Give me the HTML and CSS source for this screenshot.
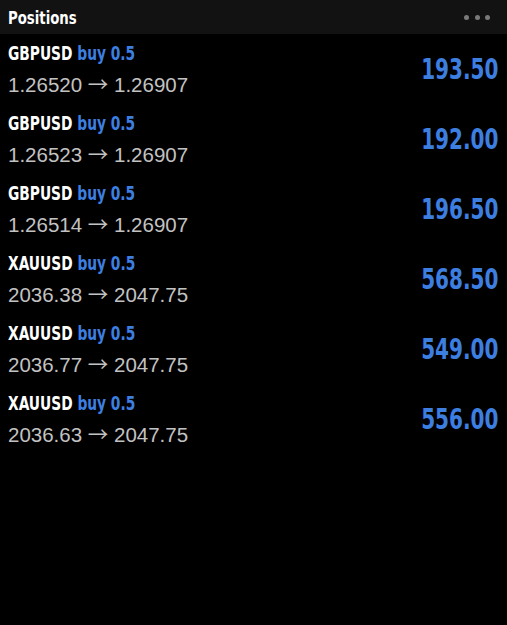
FILE: index.html
```html
<!DOCTYPE html>
<html>
<head>
    <title>Positions</title>
    <meta name="viewport" content="width=device-width, initial-scale=1.0">
    <link rel="stylesheet" href="styles.css">
</head>
<body>
    <div id="header">
        <span class="title">Positions</span>
        <span class="dots"><i></i><i></i><i></i></span>
    </div>
    <div id="positions">
        <div class="row">
            <div class="info">
                <div class="symbol">GBPUSD <span class="side">buy 0.5</span></div>
                <div class="prices">1.26520 <span class="arrow">→</span> 1.26907</div>
            </div>
            <div class="profit">193.50</div>
        </div>
        <div class="row">
            <div class="info">
                <div class="symbol">GBPUSD <span class="side">buy 0.5</span></div>
                <div class="prices">1.26523 <span class="arrow">→</span> 1.26907</div>
            </div>
            <div class="profit">192.00</div>
        </div>
        <div class="row">
            <div class="info">
                <div class="symbol">GBPUSD <span class="side">buy 0.5</span></div>
                <div class="prices">1.26514 <span class="arrow">→</span> 1.26907</div>
            </div>
            <div class="profit">196.50</div>
        </div>
        <div class="row">
            <div class="info">
                <div class="symbol">XAUUSD <span class="side">buy 0.5</span></div>
                <div class="prices">2036.38 <span class="arrow">→</span> 2047.75</div>
            </div>
            <div class="profit">568.50</div>
        </div>
        <div class="row">
            <div class="info">
                <div class="symbol">XAUUSD <span class="side">buy 0.5</span></div>
                <div class="prices">2036.77 <span class="arrow">→</span> 2047.75</div>
            </div>
            <div class="profit">549.00</div>
        </div>
        <div class="row">
            <div class="info">
                <div class="symbol">XAUUSD <span class="side">buy 0.5</span></div>
                <div class="prices">2036.63 <span class="arrow">→</span> 2047.75</div>
            </div>
            <div class="profit">556.00</div>
        </div>
    </div>
</body>
</html>
```

FILE: styles.css
```css
body {
    margin: 0;
    padding: 0;
    background-color: #000;
    color: #fff;
    font-family: "Liberation Sans", Arial, sans-serif;
}
#header {
    display: flex;
    justify-content: space-between;
    align-items: center;
    height: 34px;
    padding: 0 17px 0 8px;
    background-color: #121212;
}
/* narrow bold face: DejaVu condensed squeezed a little more */
.title {
    display: inline-block;
    font-family: "DejaVu Sans Condensed", "DejaVu Sans", sans-serif;
    font-weight: bold;
    font-size: 18px;
    transform: scaleX(0.82);
    transform-origin: left center;
}
.dots {
    display: flex;
    gap: 5.5px;
}
.dots i {
    width: 5px;
    height: 5px;
    border-radius: 50%;
    background-color: #7a7a7a;
}
.row {
    display: flex;
    justify-content: space-between;
    align-items: center;
    height: 70px;
    padding: 0 9px 0 8px;
}
.symbol {
    font-family: "DejaVu Sans Condensed", "DejaVu Sans", sans-serif;
    font-weight: bold;
    font-size: 18.7px;
    line-height: 32px;
    transform: scaleX(0.82);
    transform-origin: left center;
}
.side {
    color: #3d7fe0;
}
.prices {
    font-size: 20.5px;
    line-height: 30px;
    color: #c2c2c2;
}
.arrow {
    font-family: "Noto Sans CJK SC", sans-serif;
    font-size: 20.5px;
    line-height: 1;
}
.profit {
    font-family: "DejaVu Sans Condensed", "DejaVu Sans", sans-serif;
    font-weight: bold;
    font-size: 27.5px;
    color: #3d7fe0;
    transform: scaleX(0.81);
    transform-origin: right center;
}
```
